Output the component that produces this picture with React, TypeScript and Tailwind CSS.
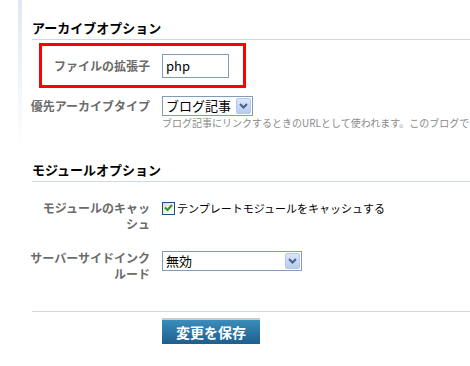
import React from "react";

const font = { fontFamily: '"Noto Sans CJK JP", "Noto Sans", sans-serif' };

function Chevron() {
  return (
    <svg width="9" height="6" viewBox="0 0 9 6">
      <path d="M1 1 L4.5 4.5 L8 1" fill="none" stroke="#4b5f86" strokeWidth="2" />
    </svg>
  );
}

function SelectBox({ text, width }: { text: string; width: string }) {
  return (
    <div
      className={`${width} h-[20px] border border-[#7f9db9] bg-white flex items-center justify-between`}
    >
      <span className="text-[13px] leading-[18px] text-black pl-[3px]">{text}</span>
      <span className="w-[15px] h-[16px] mr-[1px] border border-[#b5c8eb] bg-gradient-to-b from-[#dbe6fb] to-[#b6ccf1] rounded-[2px] flex items-center justify-center">
        <Chevron />
      </span>
    </div>
  );
}

export default function App() {
  return (
    <div className="relative w-[470px] h-[366px] bg-white overflow-hidden" style={font}>
      <div className="absolute left-[18px] top-0 w-[4px] h-[150px] bg-gradient-to-b from-[#dde9f5] via-[#eef4fa] to-white" />
      <div className="pl-[32px] pt-[16px]">
        <div className="h-[24px] leading-[24px] text-[13px] font-bold text-black border-b border-[#cbd9e4]">
          アーカイブオプション
        </div>

        <div className="mt-[3px] ml-[7px] w-[207px] h-[45px] border-[3px] border-[#f00] flex items-center">
          <div className="w-[108px] flex justify-end text-[12px] font-bold text-[#6b6b6b] whitespace-nowrap">
            ファイルの拡張子
          </div>
          <div className="ml-[12px] w-[67px] h-[24px] border border-[#7f9db9] flex items-center pl-[3px] text-[13px] text-black">
            php
          </div>
        </div>

        <div className="mt-[8px] flex items-start">
          <div className="w-[118px] flex justify-end text-[12px] leading-[20px] font-bold text-[#6b6b6b] whitespace-nowrap">
            優先アーカイブタイプ
          </div>
          <div className="ml-[12px]">
            <SelectBox text="ブログ記事" width="w-[91px]" />
          </div>
        </div>
        <div className="ml-[130px] mt-[1px] text-[10px] leading-[12px] text-[#8a8a8a] whitespace-nowrap">
          ブログ記事にリンクするときのURLとして使われます。このブログで使われる
        </div>

        <div className="mt-[29px] h-[24px] leading-[24px] text-[13px] font-bold text-black border-b border-[#cbd9e4]">
          モジュールオプション
        </div>

        <div className="mt-[18px] flex items-start">
          <div className="w-[118px] flex flex-col items-end text-[12px] leading-[16px] font-bold text-[#6b6b6b] whitespace-nowrap">
            <div>モジュールのキャッ</div>
            <div>シュ</div>
          </div>
          <div className="ml-[12px] flex items-center h-[16px]">
            <span className="w-[13px] h-[13px] border border-[#1c5180] bg-gradient-to-br from-[#dcdcd7] to-white flex items-center justify-center">
              <svg width="9" height="8" viewBox="0 0 9 8">
                <path d="M1 3.5 L3.5 6 L8 1" fill="none" stroke="#21a121" strokeWidth="2" />
              </svg>
            </span>
            <span className="ml-[2px] text-[11px] text-black whitespace-nowrap">
              テンプレートモジュールをキャッシュする
            </span>
          </div>
        </div>

        <div className="mt-[18px] flex items-start">
          <div className="w-[118px] flex flex-col items-end text-[12px] leading-[16px] font-bold text-[#6b6b6b] whitespace-nowrap">
            <div>サーバーサイドインク</div>
            <div>ルード</div>
          </div>
          <div className="ml-[12px] mt-[1px]">
            <SelectBox text="無効" width="w-[140px]" />
          </div>
        </div>

        <div className="mt-[29px] border-b border-[#cbd9e4]" />

        <div className="mt-[6px] ml-[130px]">
          <button className="w-[98px] h-[26px] border-t-2 border-[#c5ccd3] bg-gradient-to-b from-[#3a8dbb] to-[#1e5f8e] text-white text-[14px] font-bold flex items-center justify-center">
            変更を保存
          </button>
        </div>
      </div>
    </div>
  );
}
